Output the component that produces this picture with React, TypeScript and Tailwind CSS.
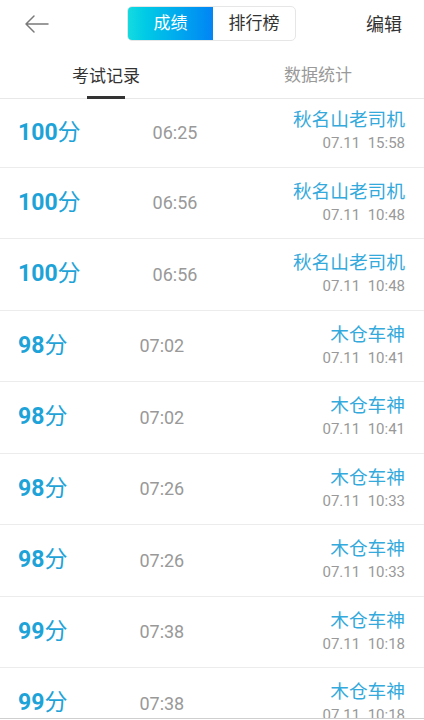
import React from "react";

const records = [
  { score: 100, time: "06:25", name: "秋名山老司机", date: "07.11", clock: "15:58" },
  { score: 100, time: "06:56", name: "秋名山老司机", date: "07.11", clock: "10:48" },
  { score: 100, time: "06:56", name: "秋名山老司机", date: "07.11", clock: "10:48" },
  { score: 98, time: "07:02", name: "木仓车神", date: "07.11", clock: "10:41" },
  { score: 98, time: "07:02", name: "木仓车神", date: "07.11", clock: "10:41" },
  { score: 98, time: "07:26", name: "木仓车神", date: "07.11", clock: "10:33" },
  { score: 98, time: "07:26", name: "木仓车神", date: "07.11", clock: "10:33" },
  { score: 99, time: "07:38", name: "木仓车神", date: "07.11", clock: "10:18" },
  { score: 99, time: "07:38", name: "木仓车神", date: "07.11", clock: "10:18" },
];

function BackArrow() {
  return (
    <svg width="26" height="20" viewBox="0 0 26 20" fill="none">
      <path d="M24 10H2M10 2L2 10l8 8" stroke="#7a7a7a" strokeWidth="1.5" strokeLinecap="round" strokeLinejoin="round" />
    </svg>
  );
}

export default function App() {
  return (
    <div
      className="w-[424px] h-[720px] bg-white flex flex-col overflow-hidden"
      style={{ fontFamily: 'Roboto, "Noto Sans CJK SC", sans-serif' }}
    >
      {/* top bar */}
      <div className="h-[48px] flex items-center justify-between pl-[24px] pr-[22px] shrink-0">
        <div className="w-[40px] flex items-center">
          <BackArrow />
        </div>
        <div className="flex h-[35px] w-[169px] rounded-[5px] border border-[#e6e6e6] overflow-hidden ml-[63px] mt-[-1px]">
          <div className="w-[85px] flex items-center justify-center text-[17px] text-white bg-gradient-to-r from-[#14dbe0] to-[#0684f4]">
            成绩
          </div>
          <div className="flex-1 flex items-center justify-center text-[17px] text-[#333]">排行榜</div>
        </div>
        <div className="flex-1 text-right text-[18px] text-[#333]">编辑</div>
      </div>

      {/* tabs */}
      <div className="h-[51px] grid grid-cols-2 border-b border-[#e8e8e8] shrink-0">
        <div className="flex flex-col items-center justify-end">
          <span className="text-[17px] text-[#333] leading-none mb-[11px]">考试记录</span>
          <div className="w-[38px] h-[3px] bg-[#333] mb-[-1px]" />
        </div>
        <div className="flex flex-col items-center justify-end">
          <span className="text-[17px] text-[#999] leading-none mb-[14px]">数据统计</span>
        </div>
      </div>

      {/* list */}
      <div className="flex-1 overflow-hidden">
        {records.map((r, i) => (
          <div
            key={i}
            className={`flex items-center justify-between pl-[18px] pr-[19px] border-b border-[#ececec] ${i === 0 ? "h-[68.5px]" : "h-[71.5px]"}`}
          >
            <div className="flex items-center">
              <span className="text-[#1ea3d8] text-[23px] font-bold">{r.score}</span>
              <span className="text-[#1ea3d8] text-[23px]">分</span>
              <span className="ml-[72px] text-[18px] text-[#999]">{r.time}</span>
            </div>
            <div className={`flex flex-col items-end ${i === 0 ? "mt-[-4px]" : "mt-[-1px]"}`}>
              <span className="text-[18.7px] text-[#33a9dc] leading-[26px]">{r.name}</span>
              <span className="text-[15px] text-[#999] leading-[21px] whitespace-pre">
                {r.date}  {r.clock}
              </span>
            </div>
          </div>
        ))}
      </div>
      <div className="h-[2px] border-t border-[#cfcfcf] bg-white shrink-0" />
    </div>
  );
}
